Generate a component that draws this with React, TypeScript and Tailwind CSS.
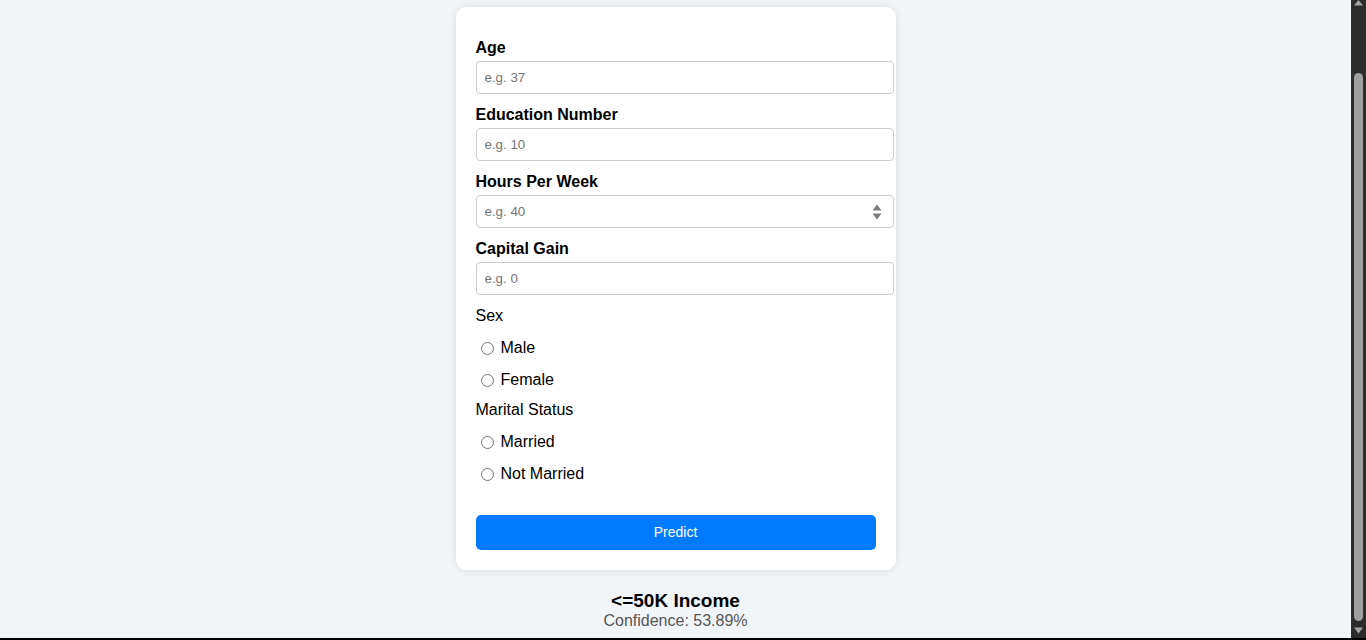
import React from "react";

const font = "font-['Liberation_Sans',Arial,sans-serif]";

const fields = [
  { label: "Age", placeholder: "e.g. 37" },
  { label: "Education Number", placeholder: "e.g. 10" },
  { label: "Hours Per Week", placeholder: "e.g. 40", spinner: true },
  { label: "Capital Gain", placeholder: "e.g. 0" },
];

function Spinner() {
  return (
    <svg width="10" height="16" viewBox="0 0 10 16" className="mr-[11px] shrink-0">
      <path d="M5 0.5 L9.5 6.5 H0.5 Z" fill="#7b7b7b" />
      <path d="M0.5 9.5 H9.5 L5 15.5 Z" fill="#7b7b7b" />
    </svg>
  );
}

function Radio({ name, label }: { name: string; label: string }) {
  return (
    <label className="flex h-[32px] items-center text-[16px] text-black">
      <input type="radio" name={name} className="m-0 ml-[5px] mr-[7px] h-[13px] w-[13px]" />
      {label}
    </label>
  );
}

export default function App() {
  return (
    <div className={`flex h-[640px] w-full flex-col overflow-hidden ${font}`}>
      <div className="flex min-h-0 flex-1">
        <main className="flex flex-1 flex-col items-center bg-[#f2f5f7] pt-[7px]">
          <form className="w-[440px] rounded-[10px] bg-white p-[20px] shadow-[0_0_10px_rgba(0,0,0,0.1)]">
            {fields.map((f) => (
              <div key={f.label}>
                <label className="mb-[4px] mt-[12px] block text-[16px] font-bold leading-[18px] text-black">
                  {f.label}
                </label>
                <div className="flex h-[33px] w-[418px] items-center rounded-[4px] border border-[#cccccc] bg-white">
                  <input
                    type="text"
                    placeholder={f.placeholder}
                    className="h-full min-w-0 flex-1 bg-transparent px-[8px] text-[13.33px] text-black outline-none placeholder:text-[#757575]"
                  />
                  {f.spinner && <Spinner />}
                </div>
              </div>
            ))}

            <div className="mt-[12px] text-[16px] leading-[18px] text-black">Sex</div>
            <div className="mt-[7px]">
              <Radio name="sex" label="Male" />
              <Radio name="sex" label="Female" />
            </div>

            <div className="mt-[5px] text-[16px] leading-[18px] text-black">Marital Status</div>
            <div className="mt-[7px]">
              <Radio name="marital" label="Married" />
              <Radio name="marital" label="Not Married" />
            </div>

            <button
              type="button"
              className="mt-[25px] flex h-[35px] w-[400px] items-center justify-center rounded-[5px] bg-[#007bff] text-[14px] text-white"
            >
              Predict
            </button>
          </form>

          <div className="mt-[19px] text-center">
            <div className="text-[19px] font-bold leading-[23px] text-black">&lt;=50K Income</div>
            <div className="text-[16px] leading-[18px] text-[#555555]">Confidence: 53.89%</div>
          </div>
        </main>

        {/* scrollbar */}
        <div className="flex w-[15px] flex-col items-center bg-[#2c2c2c]">
          <svg width="15" height="6" viewBox="0 0 15 6">
            <path d="M7.5 0 L12 5.5 H3 Z" fill="#a3a3a3" />
          </svg>
          <div className="mt-[67px] h-[548px] w-[9px] rounded-[5px] bg-[#9f9f9f]" />
          <svg width="15" height="7" viewBox="0 0 15 7" className="mt-[6px]">
            <path d="M3 0.5 H12 L7.5 6.5 Z" fill="#a3a3a3" />
          </svg>
        </div>
      </div>
      <div className="h-[2px] bg-black" />
    </div>
  );
}
